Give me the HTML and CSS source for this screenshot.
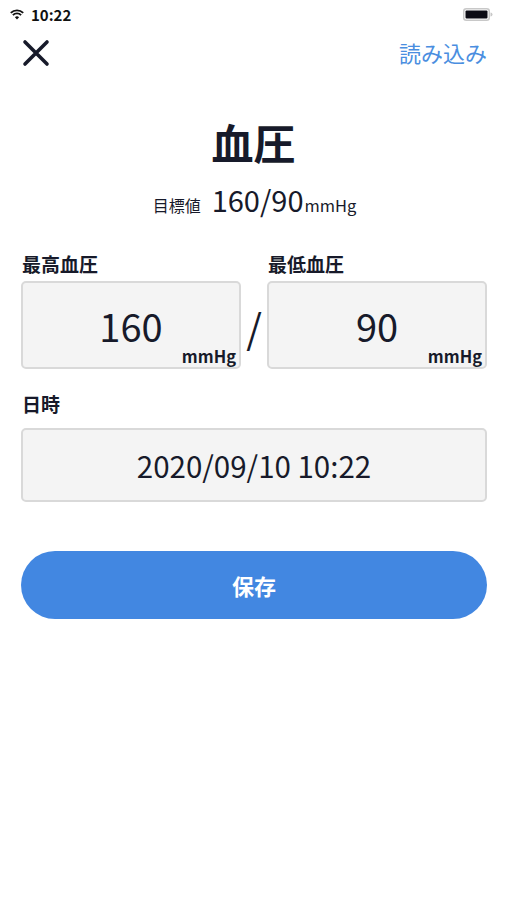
FILE: index.html
```html
<!DOCTYPE html>
<html lang="ja">
<head>
<meta charset="utf-8">
<link rel="stylesheet" href="styles.css">
</head>
<body>
<div class="screen">
  <div class="status">
    <div class="status-left">
      <svg class="wifi" width="14" height="11" viewBox="0 0 14 11">
        <path d="M7 10.5 L4.9 8.2 A3 3 0 0 1 9.1 8.2 Z" fill="#111"/>
        <path d="M2.9 6.1 A5.8 5.8 0 0 1 11.1 6.1" stroke="#111" stroke-width="1.9" fill="none"/>
        <path d="M0.8 3.9 A8.8 8.8 0 0 1 13.2 3.9" stroke="#111" stroke-width="1.9" fill="none"/>
      </svg>
      <span class="time">10:22</span>
    </div>
    <svg class="battery" width="30" height="13" viewBox="0 0 30 13">
      <rect x="0.75" y="0.75" width="25.5" height="11.5" rx="2.5" fill="none" stroke="#c8c8c8" stroke-width="1.5"/>
      <rect x="2.5" y="2.5" width="22" height="8" rx="1" fill="#0b0b14"/>
      <path d="M27.5 4.5 a1.5 1.5 0 0 1 0 4 Z" fill="#c8c8c8"/>
    </svg>
  </div>

  <div class="topbar">
    <svg class="close" width="28" height="28" viewBox="0 0 28 28">
      <path d="M3 3 L25 25 M25 3 L3 25" stroke="#171a2a" stroke-width="3.6" stroke-linecap="round"/>
    </svg>
    <span class="load">読み込み</span>
  </div>

  <h1 class="title">血圧</h1>
  <div class="target">
    <span class="target-label">目標値</span>
    <span class="target-value">160/90</span><span class="target-unit">mmHg</span>
  </div>

  <div class="pressure">
    <div class="field">
      <div class="label">最高血圧</div>
      <div class="box num-box">
        <span class="num">160</span>
        <span class="unit">mmHg</span>
      </div>
    </div>
    <div class="slash">/</div>
    <div class="field">
      <div class="label">最低血圧</div>
      <div class="box num-box">
        <span class="num">90</span>
        <span class="unit">mmHg</span>
      </div>
    </div>
  </div>

  <div class="field date-field">
    <div class="label">日時</div>
    <div class="box date-box">2020/09/10 10:22</div>
  </div>

  <button class="save">保存</button>
</div>
</body>
</html>
```

FILE: styles.css
```css
* { box-sizing: border-box; }
html, body {
  margin: 0;
  padding: 0;
  background: #fff;
}
body {
  font-family: "Noto Sans CJK JP", "Noto Sans", sans-serif;
  color: #171a2a;
}
.screen {
  width: 507px;
  height: 900px;
  display: flex;
  flex-direction: column;
}
.status {
  height: 28px;
  display: flex;
  align-items: center;
  justify-content: space-between;
  padding: 0 14px 0 10px;
}
.status-left {
  display: flex;
  align-items: center;
  gap: 7px;
}
.wifi { display: block; }
.time {
  font-size: 15px;
  font-weight: 700;
  line-height: 1;
  color: #111;
}
.battery { display: block; }
.topbar {
  display: flex;
  justify-content: space-between;
  align-items: center;
  padding: 4px 20px 0 22px;
  height: 46px;
}
.close { display: block; }
.load {
  font-size: 22px;
  color: #4a8ee0;
  line-height: 1;
  margin-top: -3px;
}
.title {
  margin: 43px 0 0;
  text-align: center;
  font-size: 42px;
  font-weight: 700;
  line-height: 50px;
}
.target {
  margin-top: 15px;
  display: flex;
  justify-content: center;
  align-items: baseline;
  padding-left: 2px;
}
.target-label {
  font-size: 16px;
  margin-right: 11px;
}
.target-value {
  font-size: 29px;
  line-height: 34px;
}
.target-unit {
  font-size: 16.5px;
  margin-left: 1px;
}
.pressure {
  display: flex;
  align-items: flex-end;
  padding: 0 20px 0 21px;
  margin-top: 35px;
}
.pressure .field { flex: 1; }
.field {
  display: flex;
  flex-direction: column;
}
.label {
  font-size: 19px;
  font-weight: 700;
  line-height: 24px;
  margin-left: 1px;
  margin-bottom: 5px;
}
.box {
  background: #f4f4f4;
  border: 2px solid #d9d9d9;
  border-radius: 5px;
}
.num-box {
  height: 88px;
  position: relative;
  display: flex;
  align-items: center;
  justify-content: center;
}
.num {
  font-size: 38px;
  line-height: 1;
  margin-top: 2px;
}
.unit {
  position: absolute;
  right: 3px;
  bottom: 3px;
  font-size: 16.5px;
  font-weight: 700;
  line-height: 1;
}
.slash {
  width: 26px;
  text-align: center;
  font-size: 40px;
  line-height: 1;
  margin-bottom: 22px;
}
.date-field {
  padding: 0 20px 0 21px;
  margin-top: 23px;
}
.date-field .label { margin-bottom: 12px; }
.date-box {
  height: 74px;
  display: flex;
  align-items: center;
  justify-content: center;
  font-size: 29.5px;
}
.save {
  margin: 49px 20px 0 21px;
  height: 68px;
  border: none;
  border-radius: 34px;
  background: #4287e1;
  color: #fff;
  font-family: inherit;
  font-size: 22px;
  font-weight: 700;
}
```
